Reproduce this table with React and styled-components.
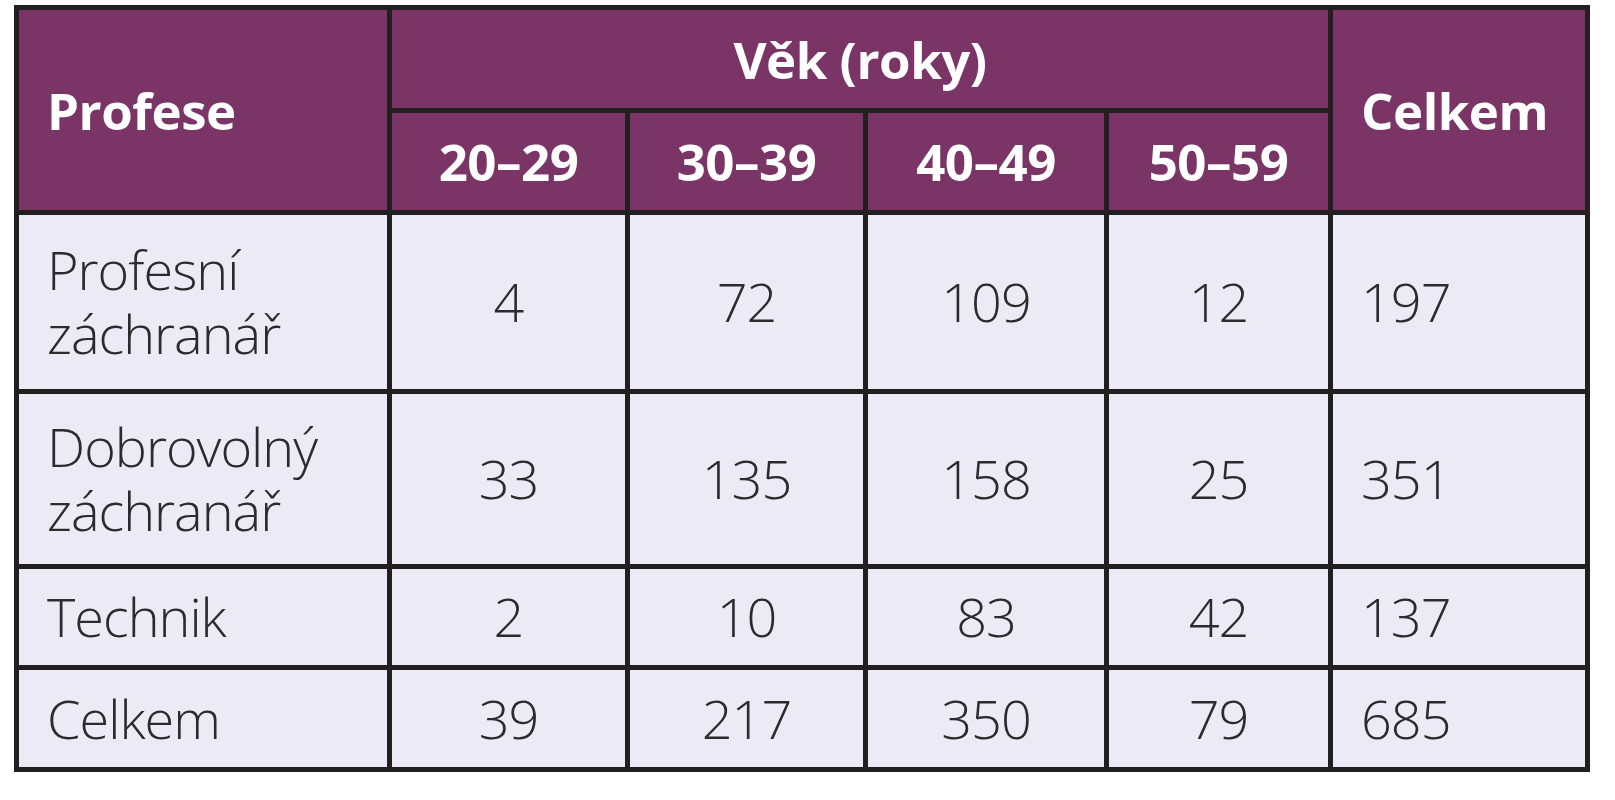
import React from "react";
import styled, { createGlobalStyle } from "styled-components";

const GlobalStyle = createGlobalStyle`
  html, body {
    margin: 0;
    padding: 0;
    background: #ffffff;
  }
  body {
    font-family: "Open Sans", "Noto Sans", "DejaVu Sans", sans-serif;
  }
`;

const Page = styled.div`
  padding: 5px 0 0 14px;
`;

const Table = styled.table`
  border-collapse: collapse;
  table-layout: fixed;
  width: 1576px;
  border: 5px solid #231f20;
`;

const HeadCell = styled.th`
  background: #7a3466;
  color: #ffffff;
  font-weight: 700;
  font-size: 51px;
  line-height: 1.1;
  border: 5px solid #231f20;
  height: ${(p) => p.$h || 97}px;
  padding: ${(p) => (p.$left ? "0 0 0 28px" : "0")};
  text-align: ${(p) => (p.$left ? "left" : "center")};
  vertical-align: middle;
  letter-spacing: -0.5px;
`;

const Row = styled.tr`
  height: ${(p) => p.$h}px;
`;

const Cell = styled.td`
  background: #ecebf5;
  color: #2b2a2c;
  font-weight: 300;
  font-size: 54px;
  line-height: 64px;
  border: 5px solid #231f20;
  padding: ${(p) => (p.$left ? "0 0 2px 28px" : "0 0 2px 0")};
  text-align: ${(p) => (p.$left ? "left" : "center")};
  vertical-align: middle;
  letter-spacing: -1px;
`;

const widths = [373, 238, 238, 241, 224, 257];

const rows = [
  { name: ["Profesní", "záchranář"], values: [4, 72, 109, 12], total: 197, h: 179 },
  { name: ["Dobrovolný", "záchranář"], values: [33, 135, 158, 25], total: 351, h: 175 },
  { name: ["Technik"], values: [2, 10, 83, 42], total: 137, h: 101 },
  { name: ["Celkem"], values: [39, 217, 350, 79], total: 685, h: 102 },
];

const ages = ["20–29", "30–39", "40–49", "50–59"];

export default function App() {
  return (
    <Page>
      <GlobalStyle />
      <Table>
        <colgroup>
          {widths.map((w, i) => (
            <col key={i} style={{ width: w }} />
          ))}
        </colgroup>
        <thead>
          <tr>
            <HeadCell rowSpan={2} $left>
              Profese
            </HeadCell>
            <HeadCell colSpan={4} $h={98}>
              Věk (roky)
            </HeadCell>
            <HeadCell rowSpan={2} $left>
              Celkem
            </HeadCell>
          </tr>
          <tr>
            {ages.map((a) => (
              <HeadCell key={a} $h={97}>
                {a}
              </HeadCell>
            ))}
          </tr>
        </thead>
        <tbody>
          {rows.map((r) => (
            <Row key={r.name.join(" ")} $h={r.h}>
              <Cell $left>
                {r.name.map((n, i) => (
                  <React.Fragment key={n}>
                    {i > 0 && <br />}
                    {n}
                  </React.Fragment>
                ))}
              </Cell>
              {r.values.map((v, i) => (
                <Cell key={i}>{v}</Cell>
              ))}
              <Cell $left>{r.total}</Cell>
            </Row>
          ))}
        </tbody>
      </Table>
    </Page>
  );
}
